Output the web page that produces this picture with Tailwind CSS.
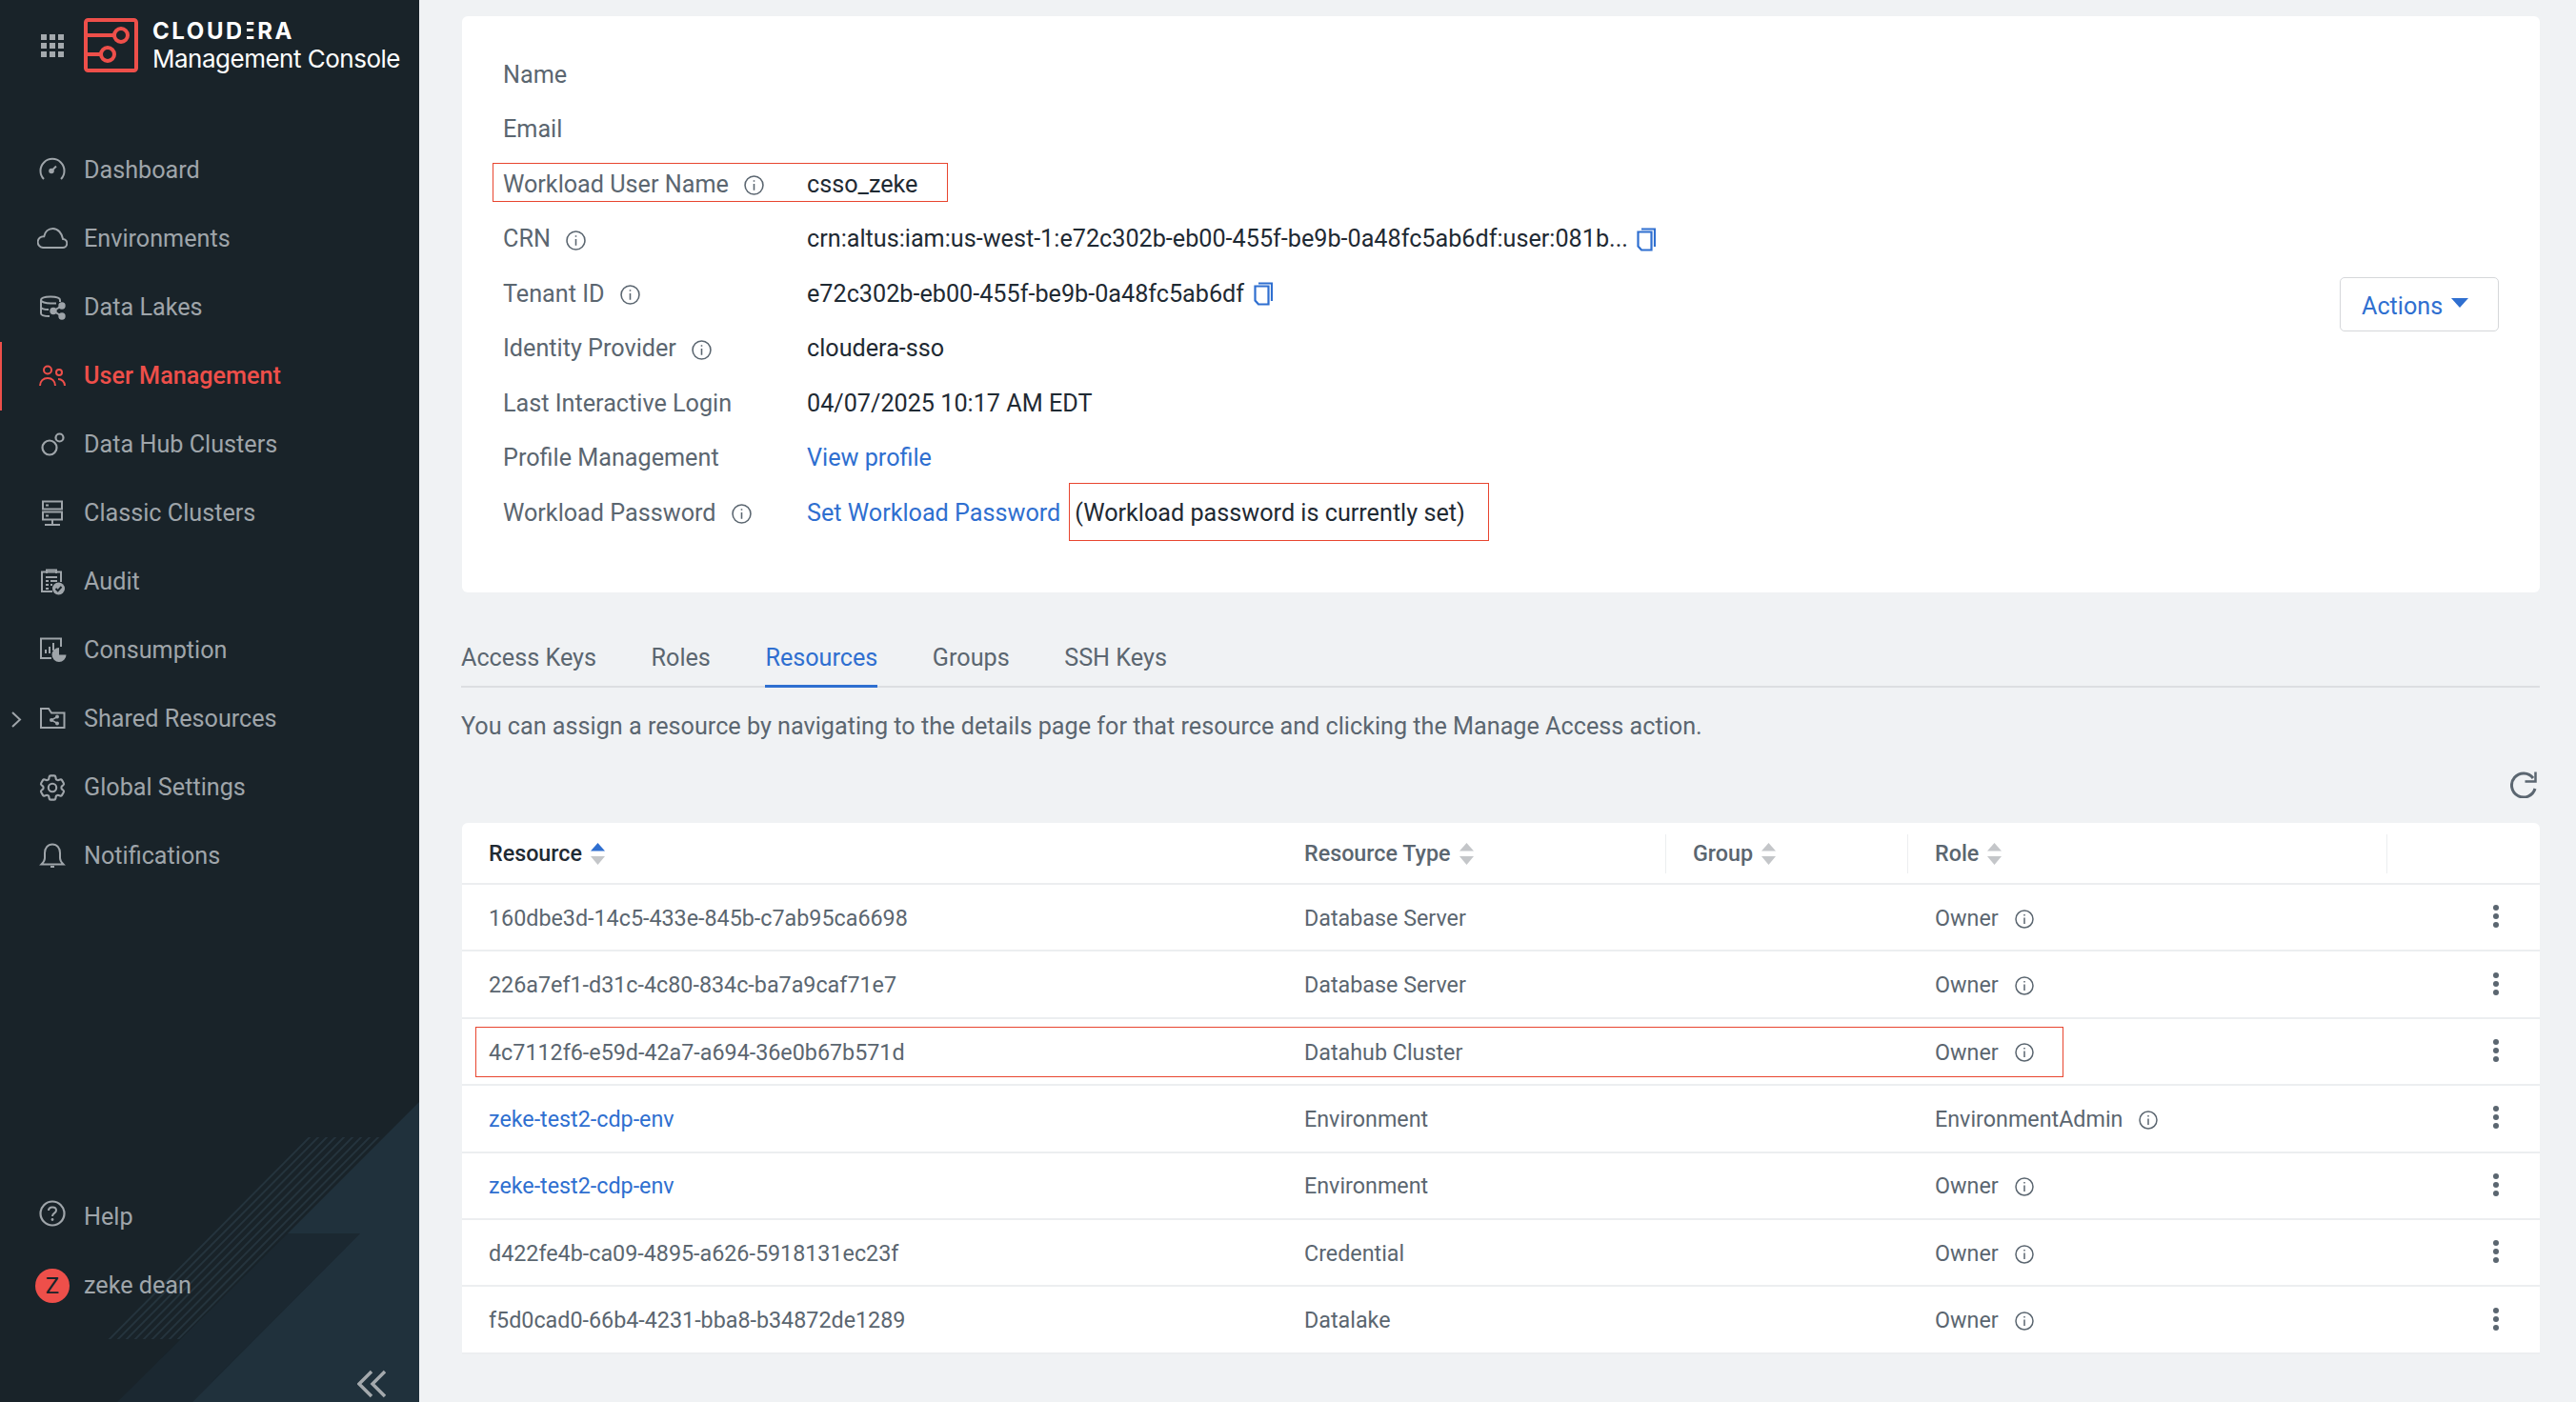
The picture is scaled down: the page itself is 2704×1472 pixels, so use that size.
<!DOCTYPE html>
<html lang="en">
<head>
<meta charset="UTF-8">
<title>Management Console</title>
<script src="https://cdn.jsdelivr.net/npm/@tailwindcss/browser@4"></script>
</head>
<body class="w-[2704px] h-[1472px] overflow-hidden bg-[#f0f2f4] font-['Roboto',sans-serif]">
<div class="relative flex h-[1472px]">

  <!-- Sidebar -->
  <aside class="relative flex w-[440px] shrink-0 flex-col overflow-hidden bg-[#192329] text-[25.200px] text-[#9fa5aa]">
    <svg class="absolute left-0 top-0" width="440" height="1472" viewBox="0 0 440 1472">
      <defs><clipPath id="stripes"><rect x="0" y="1194" width="440" height="212"/></clipPath></defs>
      <polygon points="302,1295 378,1295 202,1472 123,1472" fill="#1b2831"/>
      <polygon points="440,1157 440,1472 202,1472 378,1295 302,1295" fill="#20313c"/>
      <g clip-path="url(#stripes)" stroke="#25343d" stroke-width="2">
        <line x1="327" y1="1192" x2="113" y2="1408"/>
        <line x1="336" y1="1192" x2="122" y2="1408"/>
        <line x1="345" y1="1192" x2="131" y2="1408"/>
        <line x1="354" y1="1192" x2="140" y2="1408"/>
        <line x1="363" y1="1192" x2="149" y2="1408"/>
        <line x1="372" y1="1192" x2="158" y2="1408"/>
        <line x1="381" y1="1192" x2="167" y2="1408"/>
        <line x1="390" y1="1192" x2="176" y2="1408"/>
        <line x1="399" y1="1192" x2="185" y2="1408"/>
      </g>
    </svg>

    <!-- Logo -->
    <div class="relative flex h-[143px] items-start pt-[19px]">
      <div class="ml-[43px] mt-[17px] grid h-[24px] w-[24px] grid-cols-3 gap-[3px]">
        <i class="bg-[#a4a9ad]"></i><i class="bg-[#a4a9ad]"></i><i class="bg-[#a4a9ad]"></i>
        <i class="bg-[#a4a9ad]"></i><i class="bg-[#a4a9ad]"></i><i class="bg-[#a4a9ad]"></i>
        <i class="bg-[#a4a9ad]"></i><i class="bg-[#a4a9ad]"></i><i class="bg-[#a4a9ad]"></i>
      </div>
      <svg class="ml-[21px]" width="57" height="57" viewBox="0 0 57 57" fill="none" stroke="#ee4f4a" stroke-width="4">
        <rect x="2" y="2" width="53" height="53" rx="2.5"/>
        <path d="M2 18H32M2 38H18"/>
        <circle cx="39" cy="18" r="7"/>
        <circle cx="25" cy="38" r="7"/>
      </svg>
      <div class="ml-[15px] font-['Inter',sans-serif] text-white">
        <div class="h-[28px] text-[24px] font-bold leading-[28px] tracking-[2.600px]">CLOUD<span class="relative -ml-[4px]">E<span class="absolute bottom-0 left-0 top-0 w-[6px] bg-[#192329]"></span></span>RA</div>
        <div class="text-[26px] leading-[30px] tracking-[-0.500px]">Management Console</div>
      </div>
    </div>

    <!-- Nav -->
    <nav class="relative">
      <a class="flex h-[72px] items-center gap-[17px] pl-[39px]">
        <svg class="-mt-[2px]" width="32" height="28" viewBox="0 0 32 28" fill="none" stroke="currentColor" stroke-width="2"><path d="M7 24A12.5 12.5 0 1 1 25 24"/><circle cx="15" cy="15.500" r="1.800" fill="currentColor"/><path d="M16 14.500L20 10.500"/></svg>
        Dashboard
      </a>
      <a class="flex h-[72px] items-center gap-[17px] pl-[39px]">
        <svg width="32" height="28" viewBox="0 0 32 28" fill="none" stroke="currentColor" stroke-width="2"><path d="M6 23H26.500A4.500 4.500 0 0 0 27.100 14C26 8 22 3 16.500 3C11.800 3 8.200 6.300 7.200 11.200A5.900 5.900 0 0 0 6 23Z"/></svg>
        Environments
      </a>
      <a class="flex h-[72px] items-center gap-[17px] pl-[39px]">
        <svg width="32" height="28" viewBox="0 0 32 28" fill="none" stroke="currentColor" stroke-width="2"><path d="M24 8V6C24 3.500 19 2.500 14 2.500S4 3.500 4 6V20C4 22 8 23 13 23M4 6C4 8 9 9.500 14 9.500H20M4 13C4 15 8 16 12 16"/><circle cx="26" cy="12" r="2.700" fill="currentColor"/><circle cx="26" cy="23" r="2.700" fill="currentColor"/><circle cx="17" cy="17.500" r="2.700" fill="currentColor"/><path d="M26 12L17 17.500L26 23"/></svg>
        Data Lakes
      </a>
      <a class="relative flex h-[72px] items-center gap-[17px] pl-[39px] font-medium text-[#ee4f4a]">
        <span class="absolute bottom-0 left-0 top-0 w-[2px] bg-[#ee4f4a]"></span>
        <svg width="32" height="28" viewBox="0 0 32 28" fill="none" stroke="currentColor" stroke-width="2"><circle cx="11" cy="7.500" r="4"/><path d="M3 24C3 19 6.500 16 11 16S19 19 19 24"/><circle cx="23" cy="10" r="3"/><path d="M22 17C26 17 29 20 29 24"/></svg>
        User Management
      </a>
      <a class="flex h-[72px] items-center gap-[17px] pl-[39px]">
        <svg width="32" height="28" viewBox="0 0 32 28" fill="none" stroke="currentColor" stroke-width="2.200"><circle cx="13" cy="17" r="7.500"/><circle cx="23.500" cy="6.500" r="4"/></svg>
        Data Hub Clusters
      </a>
      <a class="flex h-[72px] items-center gap-[17px] pl-[39px]">
        <svg width="32" height="28" viewBox="0 0 32 28" fill="none" stroke="currentColor" stroke-width="2"><rect x="6" y="1.500" width="20" height="8"/><rect x="6" y="12.500" width="20" height="8"/><path d="M16 20.500V26M8 26H24M9 5.500H12M9 16.500H12"/></svg>
        Classic Clusters
      </a>
      <a class="flex h-[72px] items-center gap-[17px] pl-[39px]">
        <svg width="32" height="28" viewBox="0 0 32 28" fill="none" stroke="currentColor" stroke-width="2"><path d="M16 24H5V3.500H25V14"/><path d="M10 5V1.500H20V5M9 9H21M9 13H12M14 13H21M9 17H12M14 17H16M9 21H12"/><circle cx="22.500" cy="21" r="6.500" fill="currentColor" stroke="none"/><path d="M19.500 21L21.700 23.200L25.500 19" stroke="#192329"/></svg>
        Audit
      </a>
      <a class="flex h-[72px] items-center gap-[17px] pl-[39px]">
        <svg width="32" height="28" viewBox="0 0 32 28" fill="none" stroke="currentColor" stroke-width="2"><path d="M15 22H4V1.500H25V10"/><path d="M9 17V13M13 17V10M17 14V6"/><path d="M23 11A7.500 7.500 0 1 0 30.500 18.500H23Z" fill="currentColor" stroke="none"/></svg>
        Consumption
      </a>
      <a class="relative flex h-[72px] items-center gap-[17px] pl-[39px]">
        <svg class="absolute left-[12px] top-[28px]" width="11" height="17" viewBox="0 0 11 17" fill="none" stroke="currentColor" stroke-width="2"><path d="M1 1L9 8.500L1 16"/></svg>
        <svg width="32" height="28" viewBox="0 0 32 28" fill="none" stroke="currentColor" stroke-width="2"><path d="M4 3H12L15 7.500H28.500V23H4Z"/><path d="M22 11L15 15L22 19" stroke-width="1.500"/><circle cx="15" cy="15" r="2" fill="currentColor" stroke="none"/><circle cx="21" cy="11.500" r="2" fill="currentColor" stroke="none"/><circle cx="21" cy="18.500" r="2" fill="currentColor" stroke="none"/></svg>
        Shared Resources
      </a>
      <a class="flex h-[72px] items-center gap-[17px] pl-[39px]">
        <svg width="32" height="28" viewBox="2 2 22.857 20" fill="none" stroke="currentColor" stroke-width="1.500"><g transform="translate(1.430 0)"><path d="M9.594 3.940c.09-.542.56-.94 1.110-.94h2.593c.55 0 1.020.398 1.110.94l.213 1.281c.063.374.313.686.645.870.074.040.147.083.220.127.325.196.720.257 1.075.124l1.217-.456a1.125 1.125 0 0 1 1.370.490l1.296 2.247a1.125 1.125 0 0 1-.260 1.431l-1.003.827c-.293.241-.438.613-.430.992a7.723 7.723 0 0 1 0 .255c-.008.378.137.750.430.991l1.004.827c.424.350.534.955.260 1.430l-1.298 2.247a1.125 1.125 0 0 1-1.369.491l-1.217-.456c-.355-.133-.750-.072-1.076.124a6.470 6.470 0 0 1-.220.128c-.331.183-.581.495-.644.869l-.213 1.281c-.09.543-.56.940-1.110.940h-2.594c-.55 0-1.019-.398-1.110-.940l-.213-1.281c-.062-.374-.312-.686-.644-.870a6.520 6.520 0 0 1-.220-.127c-.325-.196-.720-.257-1.076-.124l-1.217.456a1.125 1.125 0 0 1-1.369-.490l-1.297-2.247a1.125 1.125 0 0 1 .260-1.431l1.004-.827c.292-.240.437-.613.430-.991a6.932 6.932 0 0 1 0-.255c.007-.380-.138-.751-.430-.992l-1.004-.827a1.125 1.125 0 0 1-.260-1.430l1.297-2.247a1.125 1.125 0 0 1 1.370-.491l1.216.456c.356.133.751.072 1.076-.124.072-.044.146-.086.220-.128.332-.183.582-.495.644-.869l.214-1.280Z"/><circle cx="12" cy="12" r="3"/></g></svg>
        Global Settings
      </a>
      <a class="flex h-[72px] items-center gap-[17px] pl-[39px]">
        <svg width="32" height="28" viewBox="0 0 32 28" fill="none" stroke="currentColor" stroke-width="2"><path d="M16 1.500C11 1.500 8 5.500 8 10.500V16C8 19 6 21 4.500 22.500H27.500C26 21 24 19 24 16V10.500C24 5.500 21 1.500 16 1.500ZM14 25H18"/></svg>
        Notifications
      </a>
    </nav>

    <!-- Bottom links -->
    <div class="relative mb-[86px] mt-auto">
      <a class="flex h-[72px] items-center gap-[17px] pl-[39px]">
        <svg class="-mt-[8px]" width="32" height="28" viewBox="0 0 32 28" fill="none" stroke="currentColor" stroke-width="2.200"><circle cx="16" cy="14" r="12.500"/><path d="M12 11C12 8.500 13.800 7.500 16 7.500S20 8.700 20 10.800C20 13.800 16 13.500 16 17" stroke-width="2"/><circle cx="16" cy="20.500" r="1.400" fill="currentColor" stroke="none"/></svg>
        Help
      </a>
      <a class="flex h-[72px] items-center gap-[15px] pl-[37px]">
        <span class="flex h-[36px] w-[36px] items-center justify-center rounded-full bg-[#ee4f4a] text-[24px] text-[#192329]">Z</span>
        zeke dean
      </a>
    </div>
    <svg class="absolute bottom-[4px] left-[375px]" width="30" height="30" viewBox="0 0 30 30" fill="none" stroke="#a4a9ad" stroke-width="3.500"><path d="M15 2L2 15L15 28M29 2L16 15L29 28"/></svg>
  </aside>

  <!-- Main -->
  <main class="min-w-0 flex-1 pl-[45px] pr-[38px] pt-[17px] text-[25.200px] text-[#5b6670]">

    <section class="flex h-[605px] items-center justify-between rounded-[6px] bg-white pl-[43px] pr-[43px]">
      <div class="-mt-[1px] self-start pt-[34px]">
        <div class="flex h-[57.500px] items-center">Name</div>
        <div class="flex h-[57.500px] items-center">Email</div>
        <div class="flex h-[57.500px] items-center">
          <div class="flex w-[319px] items-center gap-[16px]">Workload User Name
            <svg class="mt-[2px]" width="21" height="21" viewBox="0 0 20 20" fill="none" stroke="currentColor" stroke-width="1.500"><circle cx="10" cy="10" r="9"/><path d="M10 8.500V15M10 5V6.500"/></svg>
          </div>
          <span class="text-[#1f2a33]">csso_zeke</span>
        </div>
        <div class="flex h-[57.500px] items-center">
          <div class="flex w-[319px] items-center gap-[16px]">CRN
            <svg class="mt-[2px]" width="21" height="21" viewBox="0 0 20 20" fill="none" stroke="currentColor" stroke-width="1.500"><circle cx="10" cy="10" r="9"/><path d="M10 8.500V15M10 5V6.500"/></svg>
          </div>
          <span class="text-[#1f2a33]">crn:altus:iam:us-west-1:e72c302b-eb00-455f-be9b-0a48fc5ab6df:user:081b...</span>
          <svg class="ml-[9px]" width="20" height="25" viewBox="0 0 20 25" fill="none" stroke="#2f6fd0" stroke-width="2.200"><path d="M5 1.500H19V20"/><path d="M1.500 4.500H15.500V23.500H5L1.500 19.500Z"/></svg>
        </div>
        <div class="flex h-[57.500px] items-center">
          <div class="flex w-[319px] items-center gap-[16px]">Tenant ID
            <svg class="mt-[2px]" width="21" height="21" viewBox="0 0 20 20" fill="none" stroke="currentColor" stroke-width="1.500"><circle cx="10" cy="10" r="9"/><path d="M10 8.500V15M10 5V6.500"/></svg>
          </div>
          <span class="text-[#1f2a33]">e72c302b-eb00-455f-be9b-0a48fc5ab6df</span>
          <svg class="ml-[10px]" width="20" height="25" viewBox="0 0 20 25" fill="none" stroke="#2f6fd0" stroke-width="2.200"><path d="M5 1.500H19V20"/><path d="M1.500 4.500H15.500V23.500H5L1.500 19.500Z"/></svg>
        </div>
        <div class="flex h-[57.500px] items-center">
          <div class="flex w-[319px] items-center gap-[16px]">Identity Provider
            <svg class="mt-[2px]" width="21" height="21" viewBox="0 0 20 20" fill="none" stroke="currentColor" stroke-width="1.500"><circle cx="10" cy="10" r="9"/><path d="M10 8.500V15M10 5V6.500"/></svg>
          </div>
          <span class="text-[#1f2a33]">cloudera-sso</span>
        </div>
        <div class="flex h-[57.500px] items-center">
          <div class="w-[319px]">Last Interactive Login</div>
          <span class="text-[#1f2a33]">04/07/2025 10:17 AM EDT</span>
        </div>
        <div class="flex h-[57.500px] items-center">
          <div class="w-[319px]">Profile Management</div>
          <a class="text-[#2f6fd0]">View profile</a>
        </div>
        <div class="flex h-[57.500px] items-center">
          <div class="flex w-[319px] items-center gap-[16px]">Workload Password
            <svg class="mt-[2px]" width="21" height="21" viewBox="0 0 20 20" fill="none" stroke="currentColor" stroke-width="1.500"><circle cx="10" cy="10" r="9"/><path d="M10 8.500V15M10 5V6.500"/></svg>
          </div>
          <a class="text-[#2f6fd0]">Set Workload Password</a>
          <span class="ml-[15px] text-[#1f2a33]">(Workload password is currently set)</span>
        </div>
      </div>
      <button class="flex h-[57px] w-[167px] items-center gap-[9px] rounded-[5px] border border-[#d5d7da] pl-[22px] pt-[5px] text-[#2f6fd0]">Actions
        <svg class="-mt-[8px]" width="18" height="10" viewBox="0 0 18 10" fill="#2f6fd0"><path d="M0 0H18L9 10Z"/></svg>
      </button>
    </section>

    <!-- Tabs -->
    <div class="-ml-[1px] mt-[38px] flex h-[62px] items-center gap-[57.500px] border-b-2 border-[#dcdee1] pt-[2px]">
      <a>Access Keys</a>
      <a>Roles</a>
      <a class="flex h-[62px] items-center border-b-[3px] border-[#2f6fd0] pt-[3px] text-[#2f6fd0]">Resources</a>
      <a>Groups</a>
      <a>SSH Keys</a>
    </div>
    <p class="-ml-[1px] mt-[21px] leading-[40px]">You can assign a resource by navigating to the details page for that resource and clicking the Manage Access action.</p>
    <div class="mt-[27px] flex justify-end pr-[3px]">
      <svg width="28" height="28" viewBox="0 0 28 28" fill="none" stroke="#5b6670" stroke-width="3"><path d="M26 18A12.500 12.500 0 1 1 24 7"/><path d="M26.500 0.500V10.500H15.500" stroke-width="2.500"/></svg>
    </div>

    <!-- Table -->
    <section class="mt-[26px] rounded-t-[6px] bg-white text-[23.300px]">
      <div class="grid h-[65px] grid-cols-[855px_408px_254px_503px_1fr] items-center border-b-2 border-[#eceef0] pt-[2px] font-medium">
        <div class="flex items-center gap-[9px] pl-[28px] text-[#1f2a33]">Resource
          <svg width="15" height="23" viewBox="0 0 15 23"><path d="M7.500 0L15 8.500H0Z" fill="#2f6fd0"/><path d="M7.500 23L15 14H0Z" fill="#c4c6c9"/></svg>
        </div>
        <div class="flex items-center gap-[9px] pl-[29px]">Resource Type
          <svg width="15" height="23" viewBox="0 0 15 23" fill="#c4c6c9"><path d="M7.500 0L15 8.500H0Z"/><path d="M7.500 23L15 14H0Z"/></svg>
        </div>
        <div class="flex h-[41px] items-center gap-[9px] border-l border-[#eceef0] pl-[28px]">Group
          <svg width="15" height="23" viewBox="0 0 15 23" fill="#c4c6c9"><path d="M7.500 0L15 8.500H0Z"/><path d="M7.500 23L15 14H0Z"/></svg>
        </div>
        <div class="flex h-[41px] items-center gap-[9px] border-l border-[#eceef0] pl-[28px]">Role
          <svg width="15" height="23" viewBox="0 0 15 23" fill="#c4c6c9"><path d="M7.500 0L15 8.500H0Z"/><path d="M7.500 23L15 14H0Z"/></svg>
        </div>
        <div class="h-[41px] border-l border-[#eceef0]"></div>
      </div>
      <div id="rows"></div>
    </section>
  </main>

  <!-- Highlight boxes drawn over the page -->
  <div class="absolute left-[517px] top-[171px] h-[41px] w-[478px] border border-[#e8452f]"></div>
  <div class="absolute left-[1122px] top-[507px] h-[61px] w-[441px] border border-[#e8452f]"></div>
  <div class="absolute left-[499px] top-[1078px] h-[53px] w-[1667px] border border-[#e8452f]"></div>
</div>

<script>
  const resources = [
    ["160dbe3d-14c5-433e-845b-c7ab95ca6698", "Database Server", "Owner", false],
    ["226a7ef1-d31c-4c80-834c-ba7a9caf71e7", "Database Server", "Owner", false],
    ["4c7112f6-e59d-42a7-a694-36e0b67b571d", "Datahub Cluster", "Owner", false],
    ["zeke-test2-cdp-env", "Environment", "EnvironmentAdmin", true],
    ["zeke-test2-cdp-env", "Environment", "Owner", true],
    ["d422fe4b-ca09-4895-a626-5918131ec23f", "Credential", "Owner", false],
    ["f5d0cad0-66b4-4231-bba8-b34872de1289", "Datalake", "Owner", false]
  ];

  document.getElementById("rows").innerHTML = resources.map(r => `
    <div class="grid h-[70.400px] grid-cols-[855px_408px_254px_503px_1fr] items-center border-b-2 border-[#eceef0] pt-[2px]">
      <div class="pl-[28px] ${r[3] ? "text-[#2f6fd0]" : ""}">${r[0]}</div>
      <div class="pl-[29px]">${r[1]}</div>
      <div></div>
      <div class="flex items-center gap-[17px] pl-[29px]">${r[2]}
        <svg class="mt-[1px]" width="20" height="20" viewBox="0 0 20 20" fill="none" stroke="currentColor" stroke-width="1.500"><circle cx="10" cy="10" r="9"/><path d="M10 8.500V15M10 5V6.500"/></svg>
      </div>
      <div class="flex flex-col gap-[3px] pb-[4px] pl-[112px]">
        <i class="h-[6px] w-[6px] rounded-full bg-[#5b6670]"></i>
        <i class="h-[6px] w-[6px] rounded-full bg-[#5b6670]"></i>
        <i class="h-[6px] w-[6px] rounded-full bg-[#5b6670]"></i>
      </div>
    </div>
  `).join('');
</script>
</body>
</html>
